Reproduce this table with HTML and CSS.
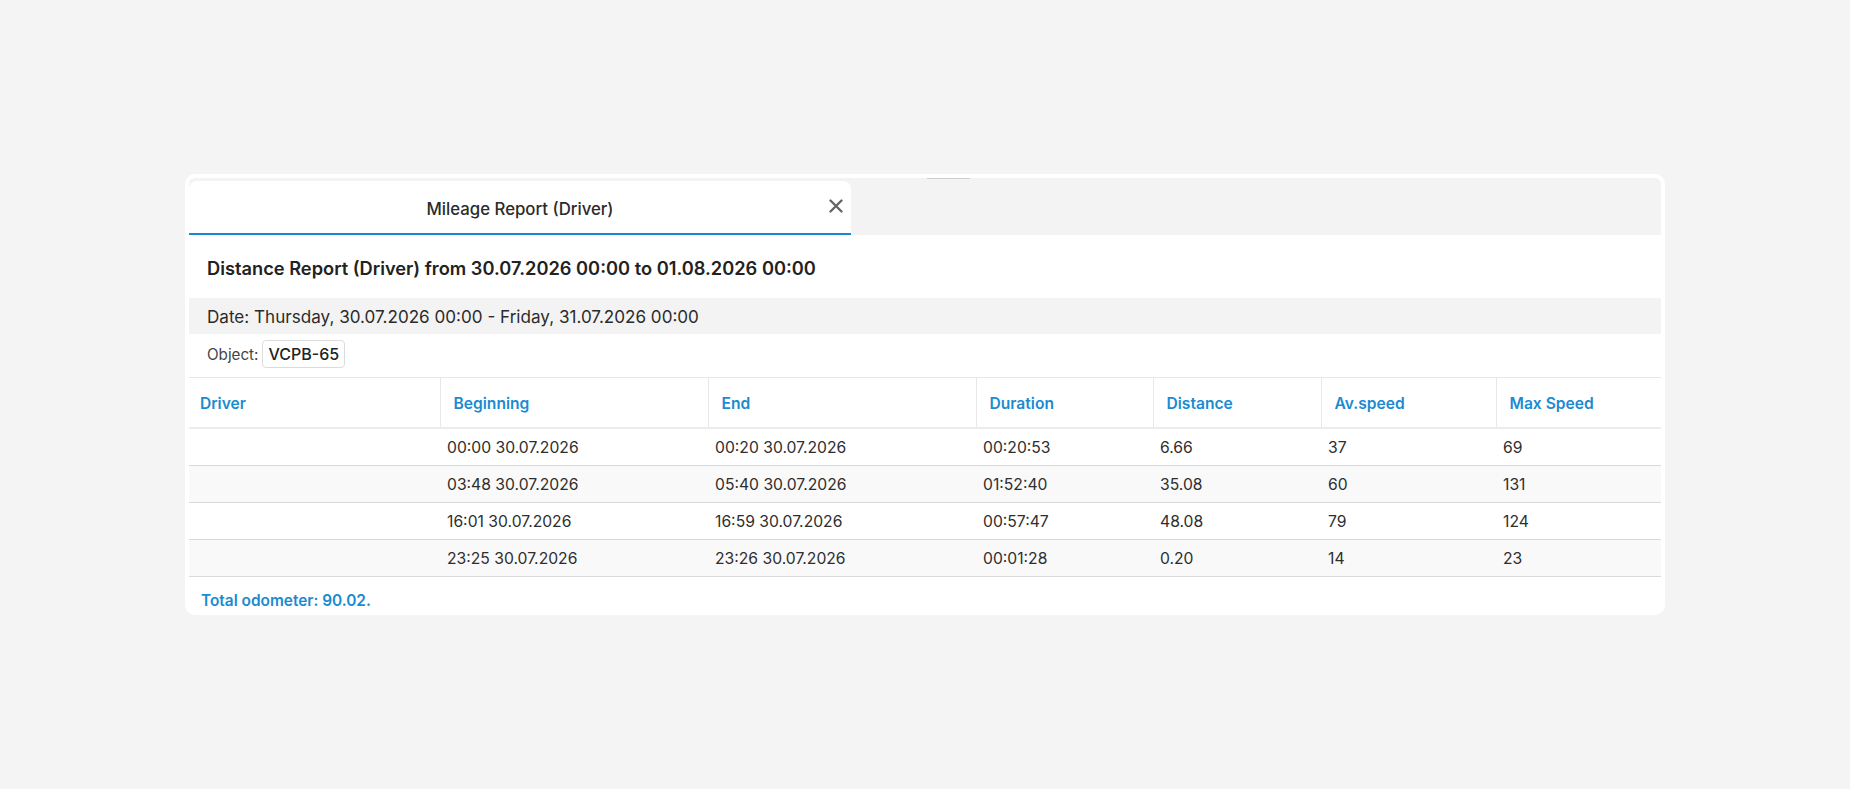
FILE: index.html
```html
<!DOCTYPE html>
<html>
<head>
<meta charset="utf-8">
<link rel="stylesheet" href="styles.css">
</head>
<body>
<div class="card">
  <div class="handle"></div>
  <div class="tabbar">
    <div class="tab">
      <span class="tab-title">Mileage Report (Driver)</span>
      <span class="tab-close"><svg width="14" height="14" viewBox="0 0 14 14"><path d="M1.5 1.5L12.5 12.5M12.5 1.5L1.5 12.5" stroke="#666" stroke-width="2.4" stroke-linecap="round"/></svg></span>
    </div>
  </div>
  <h1 class="heading">Distance Report (Driver) from 30.07.2026 00:00 to 01.08.2026 00:00</h1>
  <div class="datebar">Date: Thursday, 30.07.2026 00:00 - Friday, 31.07.2026 00:00</div>
  <div class="objectrow"><span class="obj-label">Object:</span><span class="obj-box">VCPB-65</span></div>
  <table class="report">
    <colgroup>
      <col class="c-driver"><col class="c-begin"><col class="c-end"><col class="c-dur"><col class="c-dist"><col class="c-avg"><col class="c-max">
    </colgroup>
    <thead>
      <tr><th>Driver</th><th>Beginning</th><th>End</th><th>Duration</th><th>Distance</th><th>Av.speed</th><th>Max Speed</th></tr>
    </thead>
    <tbody>
      <tr><td></td><td>00:00 30.07.2026</td><td>00:20 30.07.2026</td><td>00:20:53</td><td>6.66</td><td>37</td><td>69</td></tr>
      <tr class="alt"><td></td><td>03:48 30.07.2026</td><td>05:40 30.07.2026</td><td>01:52:40</td><td>35.08</td><td>60</td><td>131</td></tr>
      <tr><td></td><td>16:01 30.07.2026</td><td>16:59 30.07.2026</td><td>00:57:47</td><td>48.08</td><td>79</td><td>124</td></tr>
      <tr class="alt"><td></td><td>23:25 30.07.2026</td><td>23:26 30.07.2026</td><td>00:01:28</td><td>0.20</td><td>14</td><td>23</td></tr>
    </tbody>
  </table>
  <div class="total">Total odometer: 90.02.</div>
</div>
</body>
</html>
```

FILE: styles.css
```css
html, body {
  margin: 0;
  padding: 0;
}
body {
  background: #f4f4f4;
  font-family: Inter, "Noto Sans", sans-serif;
  color: #2b2b2b;
  padding-top: 174px;
}
.card {
  position: relative;
  width: 1472px;
  margin: 0 auto;
  background: #fff;
  border-radius: 10px;
  padding: 4px;
}
.handle {
  position: absolute;
  left: 742px;
  top: 4px;
  width: 43px;
  height: 1px;
  background: #cfcfcf;
}
.tabbar {
  height: 57px;
  background: #f3f3f3;
  border-radius: 6px 6px 0 0;
  display: flex;
  align-items: flex-end;
}
.tab {
  position: relative;
  width: 662px;
  height: 52px;
  background: #fff;
  border-radius: 8px 8px 0 0;
  border-bottom: 2px solid #168ad0;
  display: flex;
  align-items: center;
  justify-content: center;
}
.tab-title {
  font-size: 16.8px;
  font-weight: 500;
  color: #2b2b2b;
  padding-top: 4px;
}
.tab-close {
  position: absolute;
  right: 8px;
  top: 18px;
  width: 14px;
  height: 14px;
  display: flex;
}
.heading {
  margin: 0;
  padding: 21px 18px 18px;
  font-size: 18.25px;
  line-height: 24px;
  font-weight: 600;
  color: #222;
}
.datebar {
  height: 36px;
  line-height: 37px;
  background: #f3f3f3;
  padding-left: 18px;
  font-size: 17.1px;
  color: #2b2b2b;
}
.objectrow {
  display: flex;
  align-items: center;
  gap: 4px;
  padding: 6px 0 9px 18px;
  height: 28px;
}
.obj-label {
  font-size: 15.2px;
  color: #444;
}
.obj-box {
  height: 26px;
  line-height: 26px;
  padding: 0 5px;
  border: 1px solid #dcdcdc;
  border-radius: 4px;
  font-size: 16px;
  font-weight: 500;
  color: #222;
}
.report {
  width: 1472px;
  border-collapse: collapse;
  table-layout: fixed;
}
.c-driver { width: 251px; }
.c-begin { width: 268px; }
.c-end { width: 268px; }
.c-dur { width: 177px; }
.c-dist { width: 168px; }
.c-avg { width: 175px; }
.c-max { width: 165px; }
.report th {
  height: 48px;
  padding: 1px 13px 0;
  text-align: left;
  font-size: 15.6px;
  font-weight: 600;
  color: #1a8bd0;
  border-top: 1px solid #e6e6e6;
  border-bottom: 2px solid #ececec;
  border-left: 1px solid #e8e8e8;
}
.report th:first-child {
  border-left: none;
  padding-left: 11px;
}
.report td {
  height: 36px;
  padding: 0 7px;
  font-size: 15.7px;
  color: #2e2e2e;
  border-bottom: 1px solid #dadada;
}
.report tr.alt td {
  background: #f9f9f9;
}
.total {
  padding: 14px 12px 0;
  line-height: 20px;
  font-size: 15.4px;
  font-weight: 600;
  color: #1a8bd0;
}
```
